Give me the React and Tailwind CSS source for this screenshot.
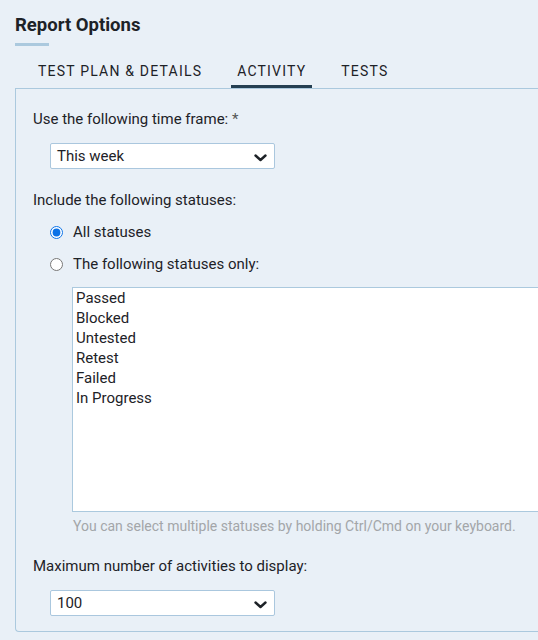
import { useState } from "react";

const statuses = ["Passed", "Blocked", "Untested", "Retest", "Failed", "In Progress"];

function Chevron() {
  return (
    <svg width="13" height="8" viewBox="0 0 13 8" className="absolute right-[7px] top-[10px] pointer-events-none">
      <path d="M1.5 1.5 L6.5 6 L11.5 1.5" fill="none" stroke="#1d2227" strokeWidth="2.4" strokeLinecap="round" strokeLinejoin="round" />
    </svg>
  );
}

function FakeSelect({ value }) {
  return (
    <div className="relative w-[225px] h-[26px] bg-white border border-[#aac7de] rounded-[2px]">
      <span className="absolute left-[6px] top-[3px] text-[15px] leading-[18px] text-[#1d2227]">{value}</span>
      <Chevron />
    </div>
  );
}

function Radio({ checked, label, onChange }) {
  return (
    <label className="flex items-center gap-[10px] h-[18px] cursor-pointer">
      <input
        type="radio"
        name="statuses"
        checked={checked}
        onChange={onChange}
        className="w-[13px] h-[13px] m-0 accent-[#0b72e7]"
      />
      <span className="text-[15px] leading-[18px] text-[#1d2227]">{label}</span>
    </label>
  );
}

export default function App() {
  const [tab, setTab] = useState("ACTIVITY");
  const [all, setAll] = useState(true);

  return (
    <div
      className="w-[538px] h-[640px] bg-[#e9f0f7] overflow-hidden pt-[14px] pl-[15px]"
      style={{ fontFamily: "Roboto, 'Liberation Sans', sans-serif" }}
    >
      <h2 className="text-[18.5px] font-bold text-[#1d2227] leading-[22px]">Report Options</h2>
      <div className="w-[34px] h-[3px] bg-[#abc9de] mt-[7px]" />

      {/* Tabs */}
      <div className="flex mt-[17px] pl-[17px]">
        {["TEST PLAN & DETAILS", "ACTIVITY", "TESTS"].map((t) => (
          <button
            key={t}
            onClick={() => setTab(t)}
            className={
              "px-[6px] pb-[5px] mr-[23px] text-[14px] tracking-[1.2px] leading-[17px] text-[#1d2227] border-b-[3px] " +
              (tab === t ? "border-[#243f52]" : "border-transparent")
            }
          >
            {t}
          </button>
        ))}
      </div>

      {/* Panel */}
      <div className="border border-r-0 border-[#abc9de] rounded-bl-[4px] w-[560px] h-[544px] pl-[17px] pt-[21px]">
        <p className="text-[15px] text-[#1d2227] leading-[18px]">
          Use the following time frame: <span className="text-[#555]">*</span>
        </p>
        <div className="mt-[15px] ml-[17px]">
          <FakeSelect value="This week" />
        </div>

        <p className="text-[15px] text-[#1d2227] leading-[18px] mt-[22px]">Include the following statuses:</p>
        <div className="ml-[17px] mt-[14px] flex flex-col gap-[14px]">
          <Radio checked={all} label="All statuses" onChange={() => setAll(true)} />
          <Radio checked={!all} label="The following statuses only:" onChange={() => setAll(false)} />
        </div>

        <div className="ml-[39px] mt-[14px] w-[480px] h-[225px] bg-white border border-[#abc9de] pl-[3px]">
          {statuses.map((s) => (
            <div key={s} className="text-[15px] leading-[20px] text-[#1d2227]">
              {s}
            </div>
          ))}
        </div>
        <p className="ml-[40px] mt-[6px] text-[14px] leading-[17px] text-[#a3a6a9]">
          You can select multiple statuses by holding Ctrl/Cmd on your keyboard.
        </p>

        <p className="text-[15px] text-[#1d2227] leading-[18px] mt-[22px]">
          Maximum number of activities to display:
        </p>
        <div className="mt-[15px] ml-[17px]">
          <FakeSelect value="100" />
        </div>
      </div>
    </div>
  );
}
